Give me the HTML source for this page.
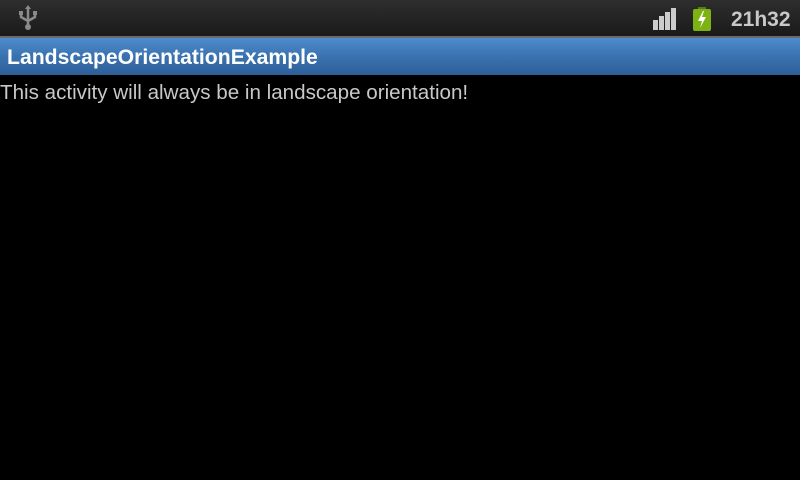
<!DOCTYPE html>
<html><head><style>
body{margin:0;width:800px;height:480px;background:#000;overflow:hidden;font-family:"Liberation Sans",sans-serif;position:relative}
#sb{position:absolute;left:0;top:0;width:800px;height:36px;background:linear-gradient(#2e2e2e,#1a1a1a)}
#ln{position:absolute;top:36px;left:0;width:800px;height:2px;background:#6a6a6a}
#tb{position:absolute;top:38px;left:0;width:800px;height:37px;background:linear-gradient(#4f8ccb,#3a72b0 50%,#2c5f98)}
#tt{position:absolute;left:7px;top:46px;color:#fff;font-weight:bold;font-size:21.2px;white-space:nowrap}
#tx{position:absolute;left:0;top:81px;color:#c8c8c8;font-size:20.6px;white-space:nowrap}
#clk{position:absolute;left:731px;top:8px;color:#c8c8c8;font-weight:bold;font-size:21px}
</style></head><body>
<div id="sb"></div><div id="ln"></div><div id="tb"></div>
<svg style="position:absolute;left:18px;top:5px" width="20" height="26" viewBox="0 0 20 26">
<g stroke="#8a8a8a" stroke-width="2.5" fill="none"><line x1="10" y1="3" x2="10" y2="22"/><path d="M3 8 V12 L10 16 L17 12 V9"/></g>
<polygon points="10,0 7,4 13,4" fill="#8a8a8a"/><circle cx="10" cy="22" r="3" fill="#8a8a8a"/>
<rect x="1" y="6" width="4" height="4" fill="#8a8a8a"/><rect x="15" y="6" width="4" height="4" fill="#8a8a8a"/></svg>
<svg style="position:absolute;left:652px;top:8px" width="26" height="22">
<rect x="1" y="12" width="5" height="10" fill="#ccc"/><rect x="7" y="8" width="5" height="14" fill="#ccc"/><rect x="13" y="4" width="5" height="18" fill="#ccc"/><rect x="19" y="0" width="5" height="22" fill="#ccc"/></svg>
<svg style="position:absolute;left:693px;top:7px" width="18" height="24">
<rect x="5" y="0" width="8" height="3" fill="#5a7a20"/><rect x="0" y="2" width="18" height="22" rx="2" fill="#7cb313"/>
<polygon points="10,4 5,14 9,14 7,21 13,10 9,10 11,4" fill="#fff"/></svg>
<div id="clk">21h32</div>
<div id="tt">LandscapeOrientationExample</div>
<div id="tx">This activity will always be in landscape orientation!</div>
</body></html>
